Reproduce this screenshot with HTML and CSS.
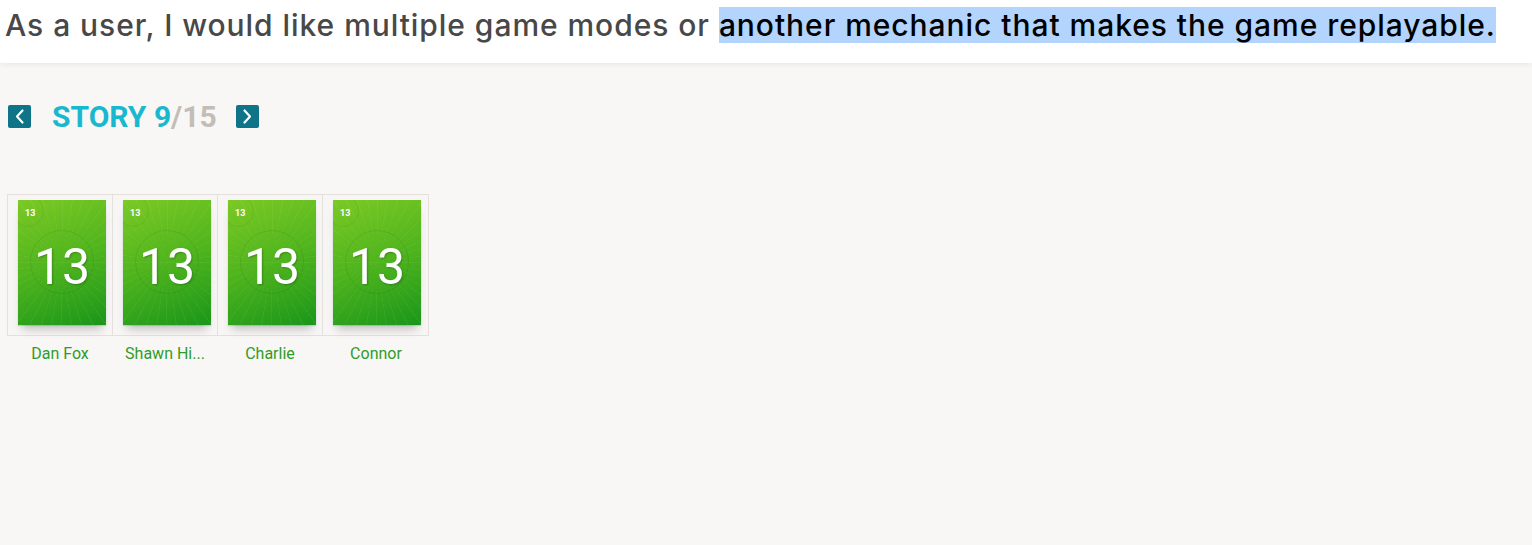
FILE: index.html
```html
<!DOCTYPE html>
<html>
<head>
<meta charset="utf-8">
<link rel="stylesheet" href="styles.css">
</head>
<body>
<header class="topbar">
  <h1 class="story-title">As a user, I would like multiple game modes or <span class="sel">another mechanic that makes the game replayable.</span></h1>
</header>
<main class="content">
  <div class="story-nav">
    <button class="nav-btn" aria-label="previous"><svg width="23" height="23" viewBox="0 0 23 23"><path d="M14.5 5.5 L9 11.5 L14.5 17.5" fill="none" stroke="#fff" stroke-width="2.2" stroke-linecap="round" stroke-linejoin="round"/></svg></button>
    <div class="story-count"><span class="cur">STORY 9</span><span class="tot">/15</span></div>
    <button class="nav-btn" aria-label="next"><svg width="23" height="23" viewBox="0 0 23 23"><path d="M8.5 5.5 L14 11.5 L8.5 17.5" fill="none" stroke="#fff" stroke-width="2.2" stroke-linecap="round" stroke-linejoin="round"/></svg></button>
  </div>
  <div class="votes">
    <div class="vote">
      <div class="cell"><div class="card"><span class="corner">13</span><span class="ring"></span><span class="big">13</span></div></div>
      <div class="name">Dan Fox</div>
    </div>
    <div class="vote">
      <div class="cell"><div class="card"><span class="corner">13</span><span class="ring"></span><span class="big">13</span></div></div>
      <div class="name">Shawn Hi...</div>
    </div>
    <div class="vote">
      <div class="cell"><div class="card"><span class="corner">13</span><span class="ring"></span><span class="big">13</span></div></div>
      <div class="name">Charlie</div>
    </div>
    <div class="vote">
      <div class="cell"><div class="card"><span class="corner">13</span><span class="ring"></span><span class="big">13</span></div></div>
      <div class="name">Connor</div>
    </div>
  </div>
</main>
</body>
</html>
```
FILE: styles.css
```css
html, body {
  margin: 0;
  padding: 0;
}
body {
  background: #f8f7f5;
  font-family: Roboto, "Liberation Sans", sans-serif;
  height: 545px;
  overflow: hidden;
}
.topbar {
  background: #fff;
  height: 63px;
  box-shadow: 0 1px 6px rgba(0,0,0,0.08);
  position: relative;
  z-index: 1;
}
.story-title {
  margin: 0;
  padding: 7px 0 0 5px;
  font-family: Inter, sans-serif;
  font-weight: 500;
  font-size: 30px;
  line-height: 37px;
  color: #484848;
  white-space: nowrap;
  letter-spacing: 0.95px;
}
.sel {
  background: #b3d4fc;
  color: #000;
}
.content {
  padding: 42px 0 0 8px;
}
.story-nav {
  display: flex;
  align-items: center;
  height: 23px;
}
.nav-btn {
  width: 23px;
  height: 23px;
  padding: 0;
  border: 0;
  border-radius: 2px;
  background: #0f7488;
  display: flex;
  align-items: center;
  justify-content: center;
}
.story-count {
  font-family: Roboto, sans-serif;
  font-weight: 700;
  font-size: 30px;
  line-height: 23px;
  margin: 0 19px 0 21px;
  white-space: nowrap;
}
.cur { color: #1ab8cf; }
.tot { color: #c2bdb7; }
.votes {
  display: flex;
  margin-top: 66px;
  margin-left: -1px;
}
.vote {
  width: 105px;
  display: flex;
  flex-direction: column;
  align-items: stretch;
}
.vote:last-child {
  width: 107px;
}
.cell {
  height: 142px;
  border: 1px solid #e4e1dc;
  border-right-width: 0;
  background: #f7f6f4;
  padding: 5px 0 0 10px;
  box-sizing: border-box;
}
.vote:last-child .cell {
  border-right-width: 1px;
}
.card {
  position: relative;
  width: 88px;
  height: 125px;
  overflow: hidden;
  background:
    repeating-conic-gradient(from 0deg at 50% 50%, rgba(255,255,255,0.05) 0deg 1deg, rgba(0,0,0,0) 1deg 9deg),
    linear-gradient(160deg, #7bc924 0%, #4fb41d 50%, #1a961a 100%);
  box-shadow: 0 8px 9px -4px rgba(0,0,0,0.22), 0 1px 1px rgba(120,180,230,0.4);
}
.corner {
  position: absolute;
  left: 7px;
  top: 7px;
  color: #fff;
  font-size: 9px;
  font-weight: 700;
  line-height: 12px;
}
.corner::after {
  content: "";
  position: absolute;
  left: -13px;
  top: -12px;
  width: 30px;
  height: 30px;
  border-radius: 50%;
  border: 1px solid rgba(0,0,0,0.06);
}
.ring {
  position: absolute;
  left: 12px;
  top: 30px;
  width: 64px;
  height: 64px;
  border-radius: 50%;
  border: 1px solid rgba(0,0,0,0.07);
  box-sizing: border-box;
}
.big {
  position: absolute;
  left: 0;
  right: 0;
  top: 42px;
  text-align: center;
  color: #fff;
  font-size: 50px;
  font-weight: 400;
  line-height: 50px;
  text-shadow: 1px 1px 2px rgba(0,0,0,0.25);
}
.name {
  margin-top: 8px;
  text-align: center;
  color: #2f9c2a;
  font-size: 16px;
  line-height: 20px;
  padding-left: 1px;
}
```
